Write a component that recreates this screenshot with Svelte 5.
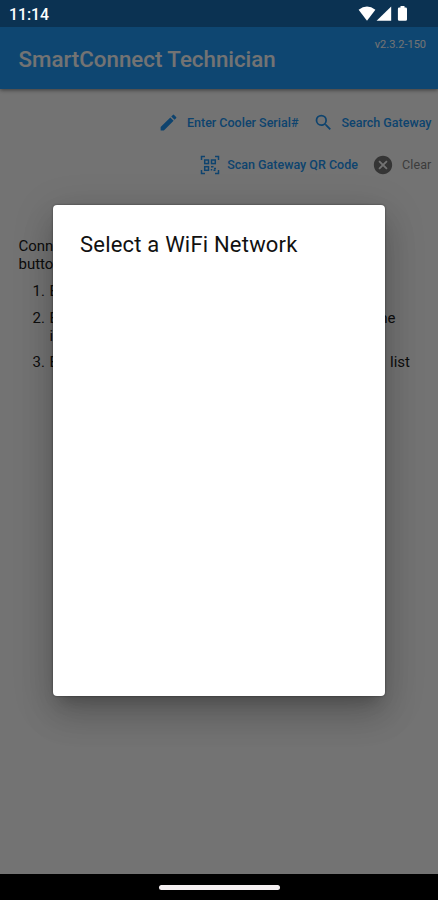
<script>
    const version = "v2.3.2-150";
    const title = "SmartConnect Technician";
    const intro = ["Connect", "buttons"];
    // each line is split so the tail sits on the right edge of the line
    const steps = [
        { lines: [{ head: "Enable WiFi on this device", tail: "", width: 300 }] },
        {
            lines: [
                { head: "Enter the serial number from", tail: "the", width: 346 },
                { head: "icon bar above", tail: "", width: 300 },
            ],
        },
        { lines: [{ head: "Be sure to select a network from", tail: "list", width: 360.5 }] },
    ];
</script>

<div class="screen">
    <div class="status-bar">
        <span class="time">11:14</span>
        <svg class="status-icons" width="50" height="18" viewBox="0 0 50 18">
            <path d="M0.6 4.7Q9 -1.8 17.4 4.7L9 15.8Z" />
            <path d="M33.2 1.4V15.8H18.6Z" />
            <path d="M42.5 1.1h4v1.5h1.2q1.3 0 1.3 1.3v10.5q0 1.4-1.4 1.4h-6.3q-1.4 0-1.4-1.4V3.9q0-1.3 1.3-1.3h1.3z" />
        </svg>
    </div>

    <div class="app">
        <header class="app-bar">
            <h1>{title}</h1>
            <span class="version">{version}</span>
        </header>

        <div class="actions">
            <div class="row">
                <button>
                    <svg width="21" height="21" viewBox="0 0 24 24">
                        <path d="M3 17.25V21h3.75L17.81 9.94l-3.75-3.75zM20.71 7.04a1 1 0 0 0 0-1.41l-2.34-2.34a1 1 0 0 0-1.41 0l-1.83 1.83 3.75 3.75z" />
                    </svg>
                    <span class="label">Enter Cooler Serial#</span>
                </button>
                <button>
                    <svg width="21" height="21" viewBox="0 0 24 24">
                        <path d="M15.5 14h-.79l-.28-.27A6.47 6.47 0 0 0 16 9.5 6.5 6.5 0 1 0 9.5 16c1.61 0 3.09-.59 4.23-1.57l.27.28v.79l5 4.99L20.49 19zm-6 0A4.5 4.5 0 1 1 14 9.5 4.5 4.5 0 0 1 9.5 14z" />
                    </svg>
                    <span class="label">Search Gateway</span>
                </button>
            </div>
            <div class="row">
                <button>
                    <svg class="outline" width="20" height="20" viewBox="0 0 20 20">
                        <path d="M1.5 5v-3.5h3.5M15 1.5h3.5v3.5M1.5 15v3.5h3.5M15 18.5h3.5v-3.5" />
                        <rect x="4.7" y="5" width="3.8" height="3.6" />
                        <rect x="11.5" y="5" width="3.8" height="3.6" />
                        <rect x="4.7" y="11.7" width="3.8" height="3.6" />
                        <path d="M11 11.7h2.5M14 13.4h2M11.5 14v1.5M13.5 15.3h2" />
                    </svg>
                    <span class="label">Scan Gateway QR Code</span>
                </button>
                <button class="clear">
                    <svg width="22" height="22" viewBox="0 0 24 24">
                        <path d="M12 2C6.47 2 2 6.47 2 12s4.47 10 10 10 10-4.47 10-10S17.53 2 12 2zm5 13.59L15.59 17 12 13.41 8.41 17 7 15.59 10.59 12 7 8.41 8.41 7 12 10.59 15.59 7 17 8.41 13.41 12z" />
                    </svg>
                    <span class="label">Clear</span>
                </button>
            </div>
        </div>

        <div class="help">
            {#each intro as line}
                <p>{line}</p>
            {/each}
            <ol>
                {#each steps as step, i}
                    <li>
                        <span class="num">{i + 1}.</span>
                        <div>
                            {#each step.lines as line}
                                <p class="line" style="width: {line.width}px">
                                    <span>{line.head}</span>
                                    <span>{line.tail}</span>
                                </p>
                            {/each}
                        </div>
                    </li>
                {/each}
            </ol>
        </div>
    </div>

    <div class="nav-bar">
        <div class="pill"></div>
    </div>

    <div class="scrim">
        <div class="dialog">
            <h2>Select a WiFi Network</h2>
        </div>
    </div>
</div>

<style>
    :global(body) {
        margin: 0;
        background: #000;
    }
    .screen {
        position: relative;
        display: flex;
        flex-direction: column;
        width: 438px;
        height: 900px;
        overflow: hidden;
        font-family: Roboto, "Liberation Sans", sans-serif;
    }
    h1, h2, p, ol {
        margin: 0;
        padding: 0;
        font-weight: 400;
    }
    .status-bar {
        position: relative;
        z-index: 2;
        display: flex;
        justify-content: space-between;
        align-items: center;
        box-sizing: border-box;
        height: 27px;
        padding: 1px 30px 0 9px;
        background: #0b3252;
        color: #fff;
    }
    .time {
        padding-top: 1px;
        font-size: 15.8px;
        font-weight: 500;
    }
    .status-icons {
        fill: #fff;
    }
    .app {
        flex: 1;
        background: #fff;
    }
    .app-bar {
        display: flex;
        justify-content: space-between;
        box-sizing: border-box;
        height: 62px;
        padding: 0 12px 0 18.5px;
        background: #219cfb;
        box-shadow: 0 1px 4px rgba(0, 0, 0, 0.5);
        color: #fff;
    }
    h1 {
        font-size: 22.3px;
        font-weight: 500;
        line-height: 64px;
    }
    .version {
        padding-top: 11px;
        font-size: 11px;
        line-height: 14px;
    }
    .actions {
        display: flex;
        flex-direction: column;
        padding: 12px 6.5px 0 0;
    }
    .row {
        display: flex;
        justify-content: flex-end;
        height: 42.5px;
    }
    button {
        display: flex;
        align-items: center;
        gap: 7.5px;
        height: 42px;
        margin-left: 14.5px;
        padding: 0;
        border: none;
        background: none;
        color: #2196f3;
        font: 500 12.5px Roboto, "Liberation Sans", sans-serif;
        white-space: nowrap;
    }
    svg {
        flex: none;
        fill: currentColor;
    }
    .outline {
        fill: none;
        stroke: currentColor;
        stroke-width: 1.5;
    }
    .clear {
        color: #858585;
        font-weight: 400;
    }
    .clear .label {
        letter-spacing: 0.15px;
    }
    .clear svg {
        fill: #757575;
    }
    .help {
        padding: 51px 18.5px 0;
        color: #212121;
        font-size: 15px;
        line-height: 18px;
        white-space: nowrap;
    }
    ol {
        padding-left: 14px;
        list-style: none;
    }
    li {
        display: flex;
        margin-top: 8.8px;
    }
    .num {
        width: 17px;
    }
    .line {
        display: flex;
        justify-content: space-between;
    }
    .nav-bar {
        position: relative;
        z-index: 2;
        display: flex;
        justify-content: center;
        align-items: center;
        height: 26px;
        background: #000;
    }
    .pill {
        width: 121px;
        height: 5px;
        border-radius: 3px;
        background: #f5f0f2;
    }
    /* dims the page below the dialog */
    .scrim {
        position: absolute;
        inset: 0;
        z-index: 1;
        display: flex;
        justify-content: center;
        align-items: center;
        background: rgba(0, 0, 0, 0.55);
    }
    .dialog {
        box-sizing: border-box;
        width: 332px;
        height: 491px;
        padding: 27px;
        border-radius: 4px;
        background: #fff;
        box-shadow: 0 11px 15px -7px rgba(0, 0, 0, 0.2),
            0 20px 34px 0 rgba(0, 0, 0, 0.14),
            0 9px 40px 4px rgba(0, 0, 0, 0.12),
            0 0 2px rgba(0, 0, 0, 0.5);
    }
    h2 {
        color: #111;
        font-size: 22px;
        line-height: 26px;
        letter-spacing: 0.2px;
    }
</style>
